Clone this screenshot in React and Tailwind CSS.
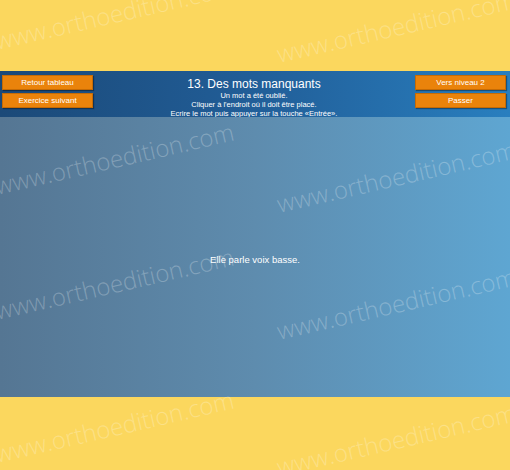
import React from "react";

function Btn({ children }) {
  return (
    <div className="w-[91px] h-[15px] bg-[#ea830b] border border-[#c56b05] shadow-[1px_1px_1px_rgba(0,0,0,0.35)] flex items-center justify-center text-white text-[8px] leading-none">
      {children}
    </div>
  );
}

function Mark({ className }) {
  return (
    <span
      className={
        "absolute whitespace-nowrap text-[24px] leading-none font-light text-white/25 rotate-[-13deg] origin-bottom-left pointer-events-none " +
        className
      }
      style={{ fontFamily: '"Open Sans", "Noto Sans", sans-serif' }}
    >
      www.orthoedition.com
    </span>
  );
}

export default function App() {
  return (
    <div
      className="relative w-[510px] h-[470px] overflow-hidden bg-[#fbd75e] flex flex-col"
      style={{ fontFamily: '"Liberation Sans", Arial, sans-serif' }}
    >
      <div className="h-[71px] shrink-0" />
      <div className="h-[46px] shrink-0 flex justify-between bg-gradient-to-r from-[#1b4978] via-[#215e98] to-[#297fbf]">
        <div className="flex flex-col gap-[3px] pt-[4px] pl-[2px]">
          <Btn>Retour tableau</Btn>
          <Btn>Exercice suivant</Btn>
        </div>
        <div className="flex flex-col items-center pt-[6px] text-white">
          <div className="text-[12px] leading-[14px]">13. Des mots manquants</div>
          <div className="text-[7.5px] leading-[9px] text-center">
            <div>Un mot a été oublié.</div>
            <div>Cliquer à l'endroit où il doit être placé.</div>
            <div>Ecrire le mot puis appuyer sur la touche «Entrée».</div>
          </div>
        </div>
        <div className="flex flex-col gap-[3px] pt-[4px] pr-[4px]">
          <Btn>Vers niveau 2</Btn>
          <Btn>Passer</Btn>
        </div>
      </div>
      <div className="h-[280px] shrink-0 flex items-center justify-center pt-[6px] bg-gradient-to-r from-[#557693] via-[#5e8cae] to-[#5ea6d2]">
        <span className="text-white text-[9.5px]">Elle parle voix basse.</span>
      </div>
      <div className="flex-1" />

      <Mark className="left-[-2px] top-[29px]" />
      <Mark className="left-[280px] top-[42px]" />
      <Mark className="left-[-2px] top-[174px]" />
      <Mark className="left-[280px] top-[192px]" />
      <Mark className="left-[-2px] top-[299px]" />
      <Mark className="left-[280px] top-[319px]" />
      <Mark className="left-[-2px] top-[442px]" />
      <Mark className="left-[280px] top-[455px]" />
    </div>
  );
}
